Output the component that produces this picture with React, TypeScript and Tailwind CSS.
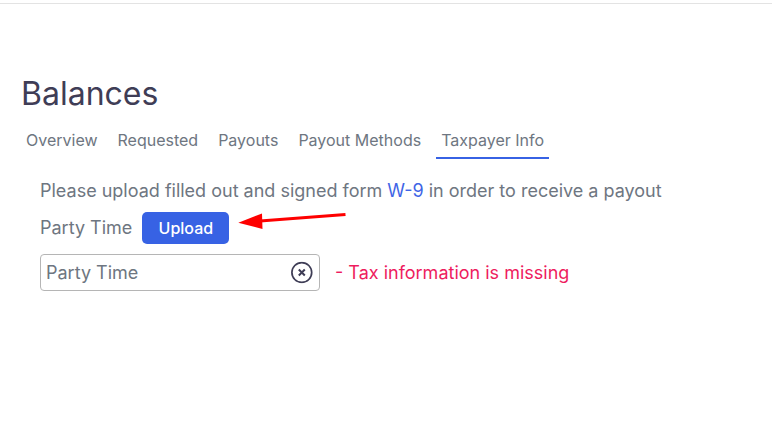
const tabs = ['Overview', 'Requested', 'Payouts', 'Payout Methods', 'Taxpayer Info'];

function UploadArrow() {
  return (
    <svg className="absolute left-[236px] top-[210px]" width="112" height="24" viewBox="0 0 112 24" fill="none">
      <path d="M109.5 4.5L24 11" stroke="#fe0000" strokeWidth="3" />
      <path d="M2.3 12.7L26 3.5L26.5 19Z" fill="#fe0000" />
    </svg>
  );
}

export default function App() {
  return (
    <div className="relative h-[446px] w-[772px] overflow-hidden bg-white font-['Inter',sans-serif]">
      <div className="h-[4px] border-b border-[#e3e3e3]" />
      <div className="pl-[21px] pt-[70px]">
        <h1 className="text-[32px] leading-[40px] text-[#3f3d56]">Balances</h1>
        <nav className="-ml-[1px] mt-[8px] flex gap-[8px]">
          {tabs.map((tab) => (
            <div
              key={tab}
              className={`h-[37px] pt-[6px] text-[16px] leading-[24px] text-[#6e7681] ${
                tab === 'Taxpayer Info' ? 'mx-[1px] border-b-2 border-[#3762e4] px-[5px]' : 'px-[6px]'
              }`}
            >
              {tab}
            </div>
          ))}
        </nav>
      </div>
      <div className="pl-[40px] pt-[20px] text-[18px] text-[#6e7681]">
        <p className="leading-[24px]">
          Please upload filled out and signed form <a className="text-[#3f65e6]">W-9</a> in order to receive a payout
        </p>
        <div className="mt-[9px] flex items-center gap-[10px]">
          <span className="mb-[2px]">Party Time</span>
          <button type="button" className="h-[32px] w-[87px] rounded-[5px] bg-[#3762e4] text-[16px] font-medium text-white">
            Upload
          </button>
        </div>
        <div className="mt-[10px] flex items-center gap-[15px]">
          <div className="flex h-[37px] w-[280px] items-center justify-between rounded-[4px] border border-[#b5b5b5] pl-[5px] pr-[6px]">
            <span>Party Time</span>
            <svg className="-translate-y-[0.5px]" width="22" height="22" viewBox="0 0 22 22" fill="none" stroke="#3f3d56">
              <circle cx="10.8" cy="11" r="9.9" strokeWidth="1.7" />
              <path d="M7.8 8L13.8 14M13.8 8L7.8 14" strokeWidth="2" />
            </svg>
          </div>
          <span className="text-[#ee1c5e]">- Tax information is missing</span>
        </div>
      </div>
      <UploadArrow />
    </div>
  );
}
